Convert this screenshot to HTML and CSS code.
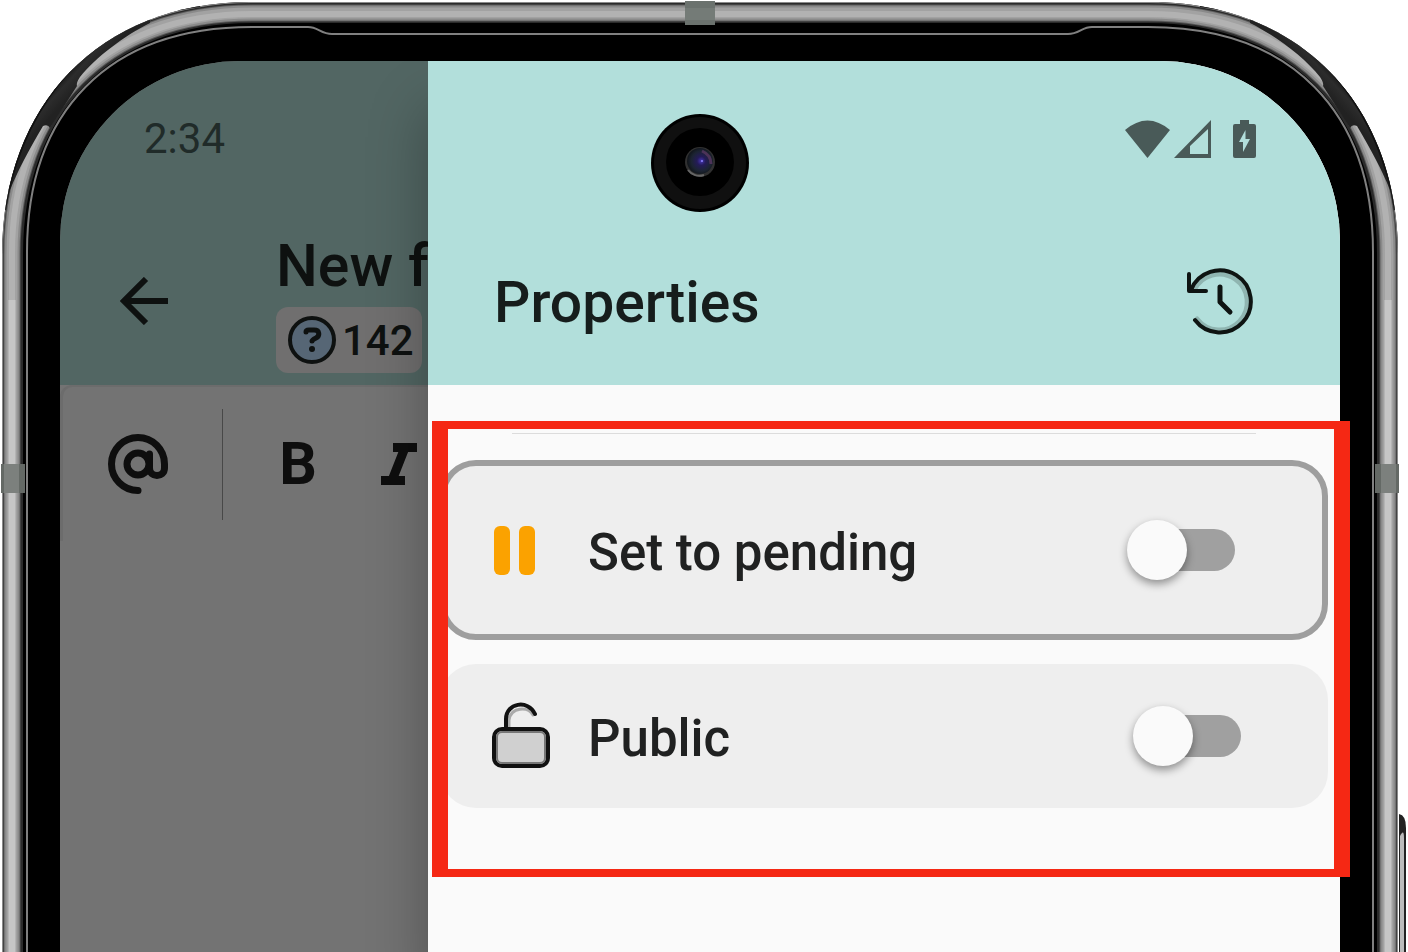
FILE: index.html
```html
<!DOCTYPE html>
<html lang="en">
<head>
    <meta charset="UTF-8">
    <meta name="viewport" content="width=device-width, initial-scale=1.0">
    <title>Properties</title>
    <link rel="stylesheet" href="styles.css">
</head>
<body>
    <div class="phone">
        <!-- Phone body -->
        <svg class="phone-frame" viewBox="0 0 1400 952" preserveAspectRatio="none" aria-hidden="true">
            <defs>
                <clipPath id="body-shape">
                    <path d="M2 960V255C2 105 100 2 250 2H1150C1300 2 1398 105 1398 255V960Z"/>
                </clipPath>
                <linearGradient id="shade" gradientUnits="userSpaceOnUse" x1="46" y1="82" x2="66" y2="100">
                    <stop offset="0" stop-color="#000"/>
                    <stop offset="0.6" stop-color="#2c2c2c"/>
                    <stop offset="1" stop-color="#222"/>
                </linearGradient>
                <g id="corner" fill="none">
                    <path d="M2 960V255C2 105 100 2 250 2H702" stroke="#8a8a8a" stroke-width="4"/>
                    <path d="M13 960V254C13 108 105 13 252 13H702" stroke="#2b2b2b" stroke-width="20"/>
                    <path d="M12 960V254C12 107 104 13 252 13H702" stroke="#5c5c5c" stroke-width="17"/>
                    <path d="M12 960V254C12 107 104 13 252 13H702" stroke="#8a8a8a" stroke-width="15"/>
                    <path d="M12 960V254C12 107 104 13 252 13H702" stroke="#a2a2a2" stroke-width="11"/>
                    <path d="M12 960V254C12 107 104 14 252 14H702" stroke="#b2b2b2" stroke-width="6"/>
                    <path d="M12 960V300" stroke="#c6c6c6" stroke-width="7"/>
                    <path d="M150 0V23C124 36 96 57 80 77Q76 83 77 86L50 128Q48 124 43 126C29 150 18 170 10 190H0V0Z" fill="url(#shade)"/>
                    <path d="M5 210C17 130 73 20 200 6" stroke="#111" stroke-width="2"/>
                    <path d="M27 960V252C27 112 108 27 252 27H308C318 27 321 34 332 34H702" stroke="#808080" stroke-width="2"/>
                </g>
            </defs>
            <path d="M2 960V255C2 105 100 2 250 2H1150C1300 2 1398 105 1398 255V960Z" fill="#000"/>
            <g clip-path="url(#body-shape)">
                <use href="#corner"/>
                <use href="#corner" transform="translate(1400 0) scale(-1 1)"/>
            </g>
            <rect x="685" y="1" width="30" height="24" fill="#6b726e"/>
            <rect x="685" y="8" width="30" height="12" fill="#747b77"/>
            <rect x="1" y="464" width="24" height="29" fill="#646965"/>
            <rect x="4" y="464" width="15" height="29" fill="#7c807d"/>
            <rect x="1375" y="464" width="24" height="29" fill="#646965"/>
            <rect x="1381" y="464" width="15" height="29" fill="#7c807d"/>
            <path d="M1399 960V814Q1406 815 1406 828V960Z" fill="#222"/>
            <path d="M1400 960V836Q1404 828 1404 838V960Z" fill="#bbb"/>
        </svg>

        <div class="screen">
            <section class="editor">
                <header class="editor-header">
                    <div class="status-bar">
                        <span class="clock">2:34</span>
                    </div>
                    <div class="title-row">
                        <button class="icon-btn" type="button" aria-label="Back">
                            <svg width="48" height="48" viewBox="0 0 48 48" fill="none" stroke="#0e1110" stroke-width="6">
                                <path d="M48 24H5M26 2L4 24L26 46"/>
                            </svg>
                        </button>
                        <div class="form-info">
                            <h2>New f</h2>
                            <span class="chip">
                                <svg width="48" height="48" viewBox="0 0 48 48" fill="none" stroke="#0e1110" aria-hidden="true">
                                    <circle cx="24" cy="24" r="22" fill="#566675" stroke-width="4"/>
                                    <path d="M18 16Q18 14 21 14H26C32 14 32 20 28 22Q24 24 24 25" stroke-width="5" stroke-linecap="round"/>
                                    <circle cx="24" cy="33" r="3" fill="#0e1110" stroke="none"/>
                                </svg>
                                142
                            </span>
                        </div>
                    </div>
                </header>
                <div class="toolbar">
                    <button class="icon-btn" type="button" aria-label="Mention">
                        <svg width="60" height="60" viewBox="0 0 60 60" fill="none" stroke="#0e0e0e" stroke-width="7" stroke-linecap="round">
                            <circle cx="30" cy="30" r="11"/>
                            <path d="M41.500 20V34C41.500 44 56.500 44 56.500 34V30A26.500 26.500 0 1 0 30 56.500"/>
                        </svg>
                    </button>
                    <span class="separator"></span>
                    <button class="icon-btn bold-btn" type="button" aria-label="Bold">B</button>
                    <button class="icon-btn italic-btn" type="button" aria-label="Italic">
                        <svg width="36" height="42" viewBox="0 0 36 42" fill="none" stroke="#0e0e0e" stroke-width="9">
                            <path d="M12 4.500H36M0 37.500H24M24 4.500L11 37.500"/>
                        </svg>
                    </button>
                </div>
            </section>

            <aside class="drawer">
                <header class="drawer-header">
                    <div class="status-bar status-icons">
                        <svg width="46" height="38" viewBox="0 0 46 38" fill="#495a58" aria-hidden="true">
                            <path d="M0 10Q22.500 -9 45 10L22.500 38Z"/>
                        </svg>
                        <svg width="38" height="38" viewBox="0 0 38 38" fill="#495a58" fill-rule="evenodd" aria-hidden="true">
                            <path d="M0 38L37 0V38ZM16 26V34H34V9Z"/>
                        </svg>
                        <svg class="battery" width="24" height="38" viewBox="0 0 24 38" aria-hidden="true">
                            <path d="M7 0H16V4H21Q23 4 23 6V36Q23 38 21 38H2Q0 38 0 36V6Q0 4 2 4H7Z" fill="#495a58"/>
                            <path d="M12.500 10L6 22H10V32L17 19H12.500Z" fill="#b2dfdb"/>
                        </svg>
                    </div>
                    <div class="title-row">
                        <h1>Properties</h1>
                        <button class="icon-btn" type="button" aria-label="History">
                            <svg width="70" height="70" viewBox="0 0 70 70" fill="none" stroke="#0e1412" stroke-width="4" stroke-linecap="round" stroke-linejoin="round">
                                <path d="M12 53A28 28 0 1 0 9 24" stroke="#8fb5b1" stroke-width="5"/>
                                <path d="M10 54A31 31 0 1 0 6 24"/>
                                <path d="M4 8V25H21"/>
                                <path d="M35 21V36L45 46" stroke-width="5"/>
                            </svg>
                        </button>
                    </div>
                </header>

                <div class="drawer-body">
                    <hr>
                    <label class="option selected">
                        <svg width="66" height="50" viewBox="0 0 66 50" fill="#fba200" aria-hidden="true">
                            <rect x="0" y="1" width="16" height="49" rx="6"/>
                            <rect x="25" y="1" width="16" height="49" rx="6"/>
                        </svg>
                        <span>Set to pending</span>
                        <input type="checkbox" role="switch" name="pending">
                    </label>
                    <label class="option">
                        <svg width="72" height="70" viewBox="0 0 72 70" fill="none" stroke="#111" stroke-width="4" stroke-linecap="round" aria-hidden="true">
                            <path d="M21 26V19C23 6 40 5 45 14" stroke="#aaa" stroke-width="3"/>
                            <path d="M18 27V18C18 2 40 -2 47 13"/>
                            <rect x="6" y="28" width="54" height="37" rx="8" fill="#d0d0d0"/>
                            <rect x="9" y="31" width="48" height="31" rx="5" stroke="#777" stroke-width="2"/>
                        </svg>
                        <span>Public</span>
                        <input type="checkbox" role="switch" name="public">
                    </label>
                </div>
                <div class="highlight"></div>
            </aside>
        </div>

        <svg class="camera" width="98" height="98" viewBox="0 0 98 98" aria-hidden="true">
            <defs>
                <radialGradient id="lens" cx="0.55" cy="0.5" r="0.55">
                    <stop offset="0" stop-color="#4636b4"/>
                    <stop offset="0.3" stop-color="#241b58"/>
                    <stop offset="0.7" stop-color="#1c2432"/>
                    <stop offset="1" stop-color="#101418"/>
                </radialGradient>
            </defs>
            <circle cx="49" cy="49" r="49" fill="#000"/>
            <circle cx="49" cy="49" r="46" fill="#101010"/>
            <circle cx="49" cy="48" r="34" fill="#000"/>
            <circle cx="49" cy="48" r="15" fill="#303030"/>
            <path d="M37 56A14 14 0 0 0 53 61" fill="none" stroke="#666" stroke-width="2"/>
            <circle cx="49" cy="47" r="13" fill="url(#lens)"/>
            <path d="M51 37Q60 41 60 50" fill="none" stroke="#4c3358" stroke-width="3"/>
            <circle cx="51" cy="47" r="1" fill="#8f86ff"/>
        </svg>
    </div>
</body>
</html>
```

FILE: styles.css
```css
* {
    box-sizing: border-box;
}

body {
    margin: 0;
    background-color: #fff;
    font-family: Roboto, Arial, sans-serif;
    overflow: hidden;
}

h1, h2 {
    margin: 0;
    font-weight: 500;
    line-height: 66px;
}

h1 {
    padding-top: 4px;
    font-size: 57px;
    color: #161d1c;
}

h2 {
    font-size: 59px;
    color: #0e1110;
}

svg {
    display: block;
    flex: none;
}

/* Phone */
.phone {
    position: relative;
    display: flex;
    min-height: 100vh;
    margin-right: 8px;
    padding: 61px 60px 0;
}

.phone-frame {
    position: absolute;
    top: 0;
    left: 0;
    width: 100%;
    height: 100%;
    overflow: visible;
}

.screen {
    position: relative;
    display: flex;
    flex: 1;
    border-radius: 180px 180px 0 0;
    background-color: #737373;
}

.camera {
    position: absolute;
    top: 114px;
    left: 50%;
    margin-left: -49px;
}

.icon-btn {
    padding: 0;
    border: none;
    background: none;
    color: #0e0e0e;
    cursor: pointer;
}

.status-bar {
    display: flex;
    align-items: center;
    height: 155px;
}

.title-row {
    display: flex;
    align-items: center;
    height: 169px;
}

/* Dimmed editor */
.editor {
    flex: none;
    width: 368px;
    overflow: hidden;
    border-top-left-radius: 180px;
    white-space: nowrap;
}

.editor-header {
    padding-left: 60px;
    background-color: #526663;
}

.clock {
    padding-left: 24px;
    font-size: 42px;
    color: #202b29;
}

.form-info {
    align-self: flex-end;
    margin: 0 0 12px 108px;
}

.chip {
    display: flex;
    align-items: center;
    gap: 6px;
    width: 146px;
    height: 66px;
    margin-top: 8px;
    padding-left: 12px;
    border-radius: 12px;
    background-color: #706f6f;
    font-size: 42px;
    font-weight: 500;
    color: #0e1110;
}

.toolbar {
    display: flex;
    align-items: center;
    height: 156px;
    padding-left: 45px;
    border-left: 3px solid #6c6c6c;
    border-top: 2px solid #6c6c6c;
    border-top-left-radius: 12px;
}

.separator {
    width: 1px;
    height: 111px;
    margin-left: 54px;
    background-color: #484848;
}

.bold-btn {
    width: 42px;
    margin-left: 54px;
    font: 700 59px/66px Roboto, Arial, sans-serif;
}

.italic-btn {
    margin-left: 62px;
}

/* Properties drawer */
.drawer {
    position: relative;
    flex: 1;
    border-top-right-radius: 180px;
    background-color: #fafafa;
    box-shadow: 0 48px 60px rgba(0, 0, 0, 0.3);
    clip-path: inset(0 -10px 0 -90px);
}

.drawer-header {
    border-top-right-radius: 180px;
    background-color: #b2dfdb;
}

.drawer-header .title-row {
    justify-content: space-between;
    padding: 0 85px 0 66px;
}

.status-icons {
    justify-content: flex-end;
    gap: 3px;
    padding-right: 83px;
}

.battery {
    margin-left: 18px;
}

.drawer-body {
    display: flex;
    flex-direction: column;
    gap: 24px;
    padding: 48px 12px;
}

hr {
    width: calc(100% - 144px);
    height: 1px;
    margin: 0 auto 2px;
    border: none;
    background-color: #dcdcdc;
}

.option {
    display: flex;
    align-items: center;
    gap: 28px;
    height: 144px;
    padding: 0 87px 0 48px;
    border-radius: 36px;
    background-color: #eee;
    font-size: 51px;
    font-weight: 500;
    color: #202121;
    cursor: pointer;
}

.option.selected {
    height: 180px;
    border: 6px solid #9e9e9e;
}

.option span {
    flex: 1;
    padding-top: 4px;
}

.option input {
    appearance: none;
    flex: none;
    width: 102px;
    height: 42px;
    margin: 0;
    border-radius: 21px;
    background-color: #a0a0a0;
    cursor: pointer;
}

.option input::before {
    content: "";
    display: block;
    width: 60px;
    height: 60px;
    margin: -9px 0 0 -6px;
    border-radius: 50%;
    background-color: #fafafa;
    box-shadow: 0 4px 8px rgba(0, 0, 0, 0.4);
}

.option input:checked::before {
    margin-left: 48px;
}

.highlight {
    position: absolute;
    top: 360px;
    left: 4px;
    right: -10px;
    height: 456px;
    border: solid #f52814;
    border-width: 8px 16px;
    pointer-events: none;
}
```
